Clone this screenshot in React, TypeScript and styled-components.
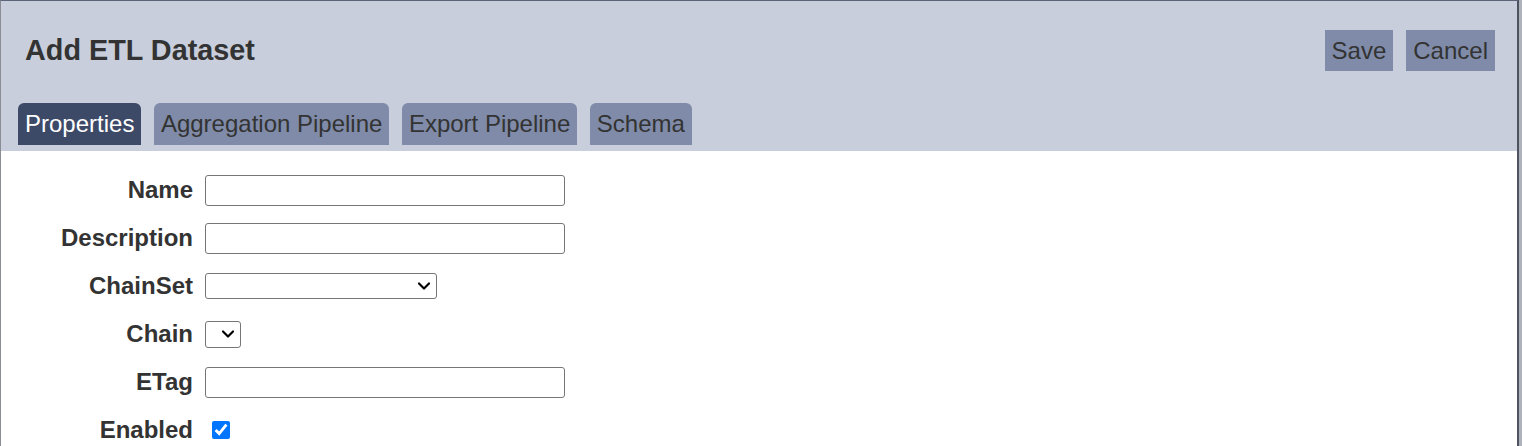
import { useState } from 'react';
import styled, { createGlobalStyle } from 'styled-components';
import { ChevronDown } from 'lucide-react';

const GlobalStyle = createGlobalStyle`
  html, body {
    margin: 0;
    padding: 0;
    background: #aeb2ba;
    overflow: hidden;
  }
  body {
    font-family: "Liberation Sans", Arial, sans-serif;
    color: #333;
  }
`;

const Dialog = styled.div`
  width: 1516px;
  height: 446px;
  background: #fff;
  border-top: 1px solid #5b6477;
  border-left: 1px solid #8a8d94;
  border-right: 2px solid #4d5361;
  overflow: hidden;
`;

const Header = styled.div`
  background: #c8cedb;
  padding: 0 22px 6px 17px;
`;

const TitleRow = styled.div`
  height: 99px;
  display: flex;
  align-items: center;
  justify-content: space-between;
`;

const Title = styled.h2`
  margin: 0 0 0 7px;
  font-size: 28.8px;
  font-weight: 700;
  color: #333;
`;

const Actions = styled.div`
  display: flex;
  gap: 13px;
`;

const ActionButton = styled.button`
  height: 41px;
  padding: 0 7px;
  border: none;
  border-radius: 0;
  background: #7f8ba8;
  color: #333;
  font-family: inherit;
  font-size: 24px;
  cursor: pointer;
`;

const Tabs = styled.div`
  margin-top: 3px;
  display: flex;
  gap: 12.5px;
`;

const Tab = styled.button<{ $active?: boolean }>`
  height: 42px;
  padding: 0 7px;
  border: none;
  border-radius: 6px 6px 0 0;
  background: ${(p) => (p.$active ? '#3d4a67' : '#7f8ba8')};
  color: ${(p) => (p.$active ? '#fff' : '#333')};
  font-family: inherit;
  font-size: 24px;
  cursor: pointer;
`;

const FormGrid = styled.div`
  display: grid;
  grid-template-columns: 192px auto;
  grid-auto-rows: 48px;
  column-gap: 12px;
  align-items: center;
  justify-items: start;
  padding-top: 15px;
`;

const Label = styled.label`
  justify-self: end;
  font-size: 24px;
  font-weight: 700;
  color: #333;
`;

const TextInput = styled.input`
  box-sizing: border-box;
  width: 360px;
  height: 31px;
  border: 1px solid #767676;
  border-radius: 3px;
  font-family: inherit;
  font-size: 18px;
  padding: 0 6px;
`;

const SelectWrap = styled.div`
  position: relative;
  display: flex;

  svg {
    position: absolute;
    right: 3px;
    top: 50%;
    transform: translateY(-50%);
    pointer-events: none;
    color: #000;
  }
`;

const Select = styled.select<{ $width: number; $height: number }>`
  box-sizing: border-box;
  appearance: none;
  width: ${(p) => p.$width}px;
  height: ${(p) => p.$height}px;
  border: 1px solid #767676;
  border-radius: 3px;
  background: #fff;
  font-family: inherit;
  font-size: 16px;
  color: #000;
`;

const Checkbox = styled.input`
  width: 18px;
  height: 18px;
  margin: 0 0 0 7px;
`;

const tabs = ['Properties', 'Aggregation Pipeline', 'Export Pipeline', 'Schema'];

export default function App() {
  const [active, setActive] = useState(0);
  const [enabled, setEnabled] = useState(true);

  return (
    <>
      <GlobalStyle />
      <Dialog>
        <Header>
          <TitleRow>
            <Title>Add ETL Dataset</Title>
            <Actions>
              <ActionButton>Save</ActionButton>
              <ActionButton>Cancel</ActionButton>
            </Actions>
          </TitleRow>
          <Tabs>
            {tabs.map((t, i) => (
              <Tab key={t} $active={i === active} onClick={() => setActive(i)}>
                {t}
              </Tab>
            ))}
          </Tabs>
        </Header>

        <FormGrid>
          <Label>Name</Label>
          <TextInput type="text" />

          <Label>Description</Label>
          <TextInput type="text" />

          <Label>ChainSet</Label>
          <SelectWrap>
            <Select $width={232} $height={26}>
              <option value=""></option>
            </Select>
            <ChevronDown size={20} strokeWidth={2.6} />
          </SelectWrap>

          <Label>Chain</Label>
          <SelectWrap>
            <Select $width={36} $height={27}>
              <option value=""></option>
            </Select>
            <ChevronDown size={20} strokeWidth={2.6} />
          </SelectWrap>

          <Label>ETag</Label>
          <TextInput type="text" />

          <Label>Enabled</Label>
          <Checkbox
            type="checkbox"
            checked={enabled}
            onChange={(e) => setEnabled(e.target.checked)}
          />
        </FormGrid>
      </Dialog>
    </>
  );
}
